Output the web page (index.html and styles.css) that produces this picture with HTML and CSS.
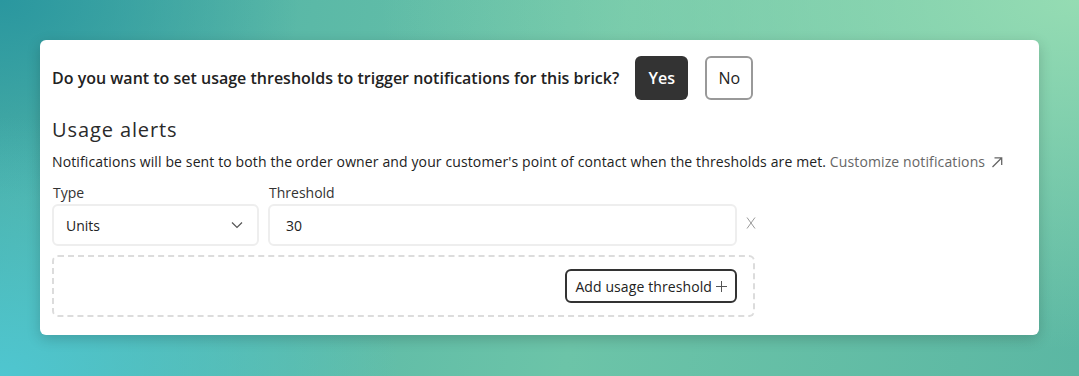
FILE: index.html
```html
<!DOCTYPE html>
<html>
<head>
<meta charset="utf-8">
<link rel="stylesheet" href="styles.css">
</head>
<body>
<div class="card">
  <div class="question-row">
    <span class="question">Do you want to set usage thresholds to trigger notifications for this brick?</span>
    <button class="btn-yes">Yes</button>
    <button class="btn-no">No</button>
  </div>
  <h2 class="title">Usage alerts</h2>
  <p class="desc">Notifications will be sent to both the order owner and your customer's point of contact when the thresholds are met. <a class="link">Customize notifications <svg class="arrow" width="12" height="12" viewBox="0 0 12 12"><path d="M1.5 11 L10.5 2 M3.5 1.8 H10.7 V9" fill="none" stroke="#666" stroke-width="1.3"/></svg></a></p>
  <div class="fields">
    <div class="field type-field">
      <label class="label">Type</label>
      <div class="select"><span>Units</span><svg width="12" height="8" viewBox="0 0 12 8"><path d="M1 1.5 L6 6.5 L11 1.5" fill="none" stroke="#555" stroke-width="1.2"/></svg></div>
    </div>
    <div class="field thr-field">
      <label class="label">Threshold</label>
      <div class="input">30</div>
    </div>
    <div class="remove"><svg width="10" height="12" viewBox="0 0 10 12"><path d="M1 0.5 L9 11.5 M9 0.5 L1 11.5" fill="none" stroke="#999" stroke-width="1"/></svg></div>
  </div>
  <div class="dashed">
    <button class="btn-add">Add usage threshold <svg class="plus" width="11" height="11" viewBox="0 0 11 11"><path d="M5.5 0 V11 M0 5.5 H11" fill="none" stroke="#555" stroke-width="1"/></svg></button>
  </div>
</div>
</body>
</html>
```
FILE: styles.css
```css
html, body { margin: 0; padding: 0; }
body {
  width: 1079px;
  height: 376px;
  box-sizing: border-box;
  padding: 40px 40px 0 40px;
  font-family: "Open Sans", "Liberation Sans", sans-serif;
  color: #222;
  background:
    radial-gradient(ellipse 700px 350px at 1079px 0px, #95dcb3 0%, rgba(149,220,179,0) 100%),
    radial-gradient(ellipse 400px 260px at 0px 376px, #4fc6d0 0%, rgba(79,198,208,0) 100%),
    radial-gradient(ellipse 300px 200px at 0px 0px, #2a979f 0%, rgba(42,151,159,0) 100%),
    linear-gradient(100deg, #4aaea6 0%, #6cc4a8 55%, #5bb7a3 100%);
  overflow: hidden;
}
.card {
  background: #fff;
  border-radius: 6px;
  box-shadow: 0 4px 14px rgba(0,0,0,0.18);
  padding: 16px 12px 17px 12px;
  height: 295px;
  box-sizing: border-box;
}
.question-row {
  display: flex;
  align-items: center;
}
.question {
  font-size: 16px;
  font-weight: 600;
  color: #222;
  margin-right: 16px;
}
.btn-yes, .btn-no {
  font-family: "Open Sans", "Liberation Sans", sans-serif;
  font-size: 16px;
  height: 44px;
  border-radius: 6px;
  padding: 0;
  cursor: pointer;
}
.btn-yes {
  width: 53px;
  background: #333;
  color: #fff;
  border: none;
  font-weight: 600;
  margin-right: 17px;
}
.btn-no {
  width: 48px;
  background: #fff;
  color: #222;
  border: 2px solid #999;
}
.title {
  font-size: 20px;
  font-weight: 500;
  letter-spacing: 0.9px;
  color: #2a2a2a;
  margin: 16px 0 0 0;
  line-height: 28px;
}
.desc {
  font-size: 14px;
  letter-spacing: 0.12px;
  margin: 8px 0 0 0;
  line-height: 20px;
  color: #222;
}
.link { color: #666; }
.arrow { vertical-align: -1px; margin-left: 2px; }
.fields {
  display: flex;
  align-items: flex-end;
  gap: 9px;
  margin-top: 11px;
}
.field { display: flex; flex-direction: column; }
.label {
  font-size: 14px;
  color: #333;
  line-height: 20px;
  margin-bottom: 1px;
  padding-left: 1px;
}
.type-field { width: 207px; }
.thr-field { width: 469px; }
.select, .input {
  height: 42px;
  box-sizing: border-box;
  border: 2px solid #eeeeee;
  border-radius: 6px;
  font-size: 14px;
  color: #222;
  display: flex;
  align-items: center;
}
.select {
  justify-content: space-between;
  padding: 0 14px 0 12px;
}
.input { padding: 0 16px; }
.remove {
  height: 42px;
  display: flex;
  align-items: center;
  padding-bottom: 4px;
  box-sizing: border-box;
}
.dashed {
  width: 703px;
  height: 62px;
  box-sizing: border-box;
  margin-top: 9px;
  border: 2px dashed #dcdcdc;
  border-radius: 6px;
  display: flex;
  align-items: center;
  justify-content: flex-end;
  padding-right: 16px;
}
.btn-add {
  font-family: "Open Sans", "Liberation Sans", sans-serif;
  font-size: 14px;
  letter-spacing: 0.1px;
  color: #222;
  background: #fff;
  border: 2px solid #333;
  border-radius: 6px;
  height: 34px;
  padding: 0 8px;
  cursor: pointer;
  display: flex;
  align-items: center;
  gap: 4px;
}
.plus { display: block; }
```
